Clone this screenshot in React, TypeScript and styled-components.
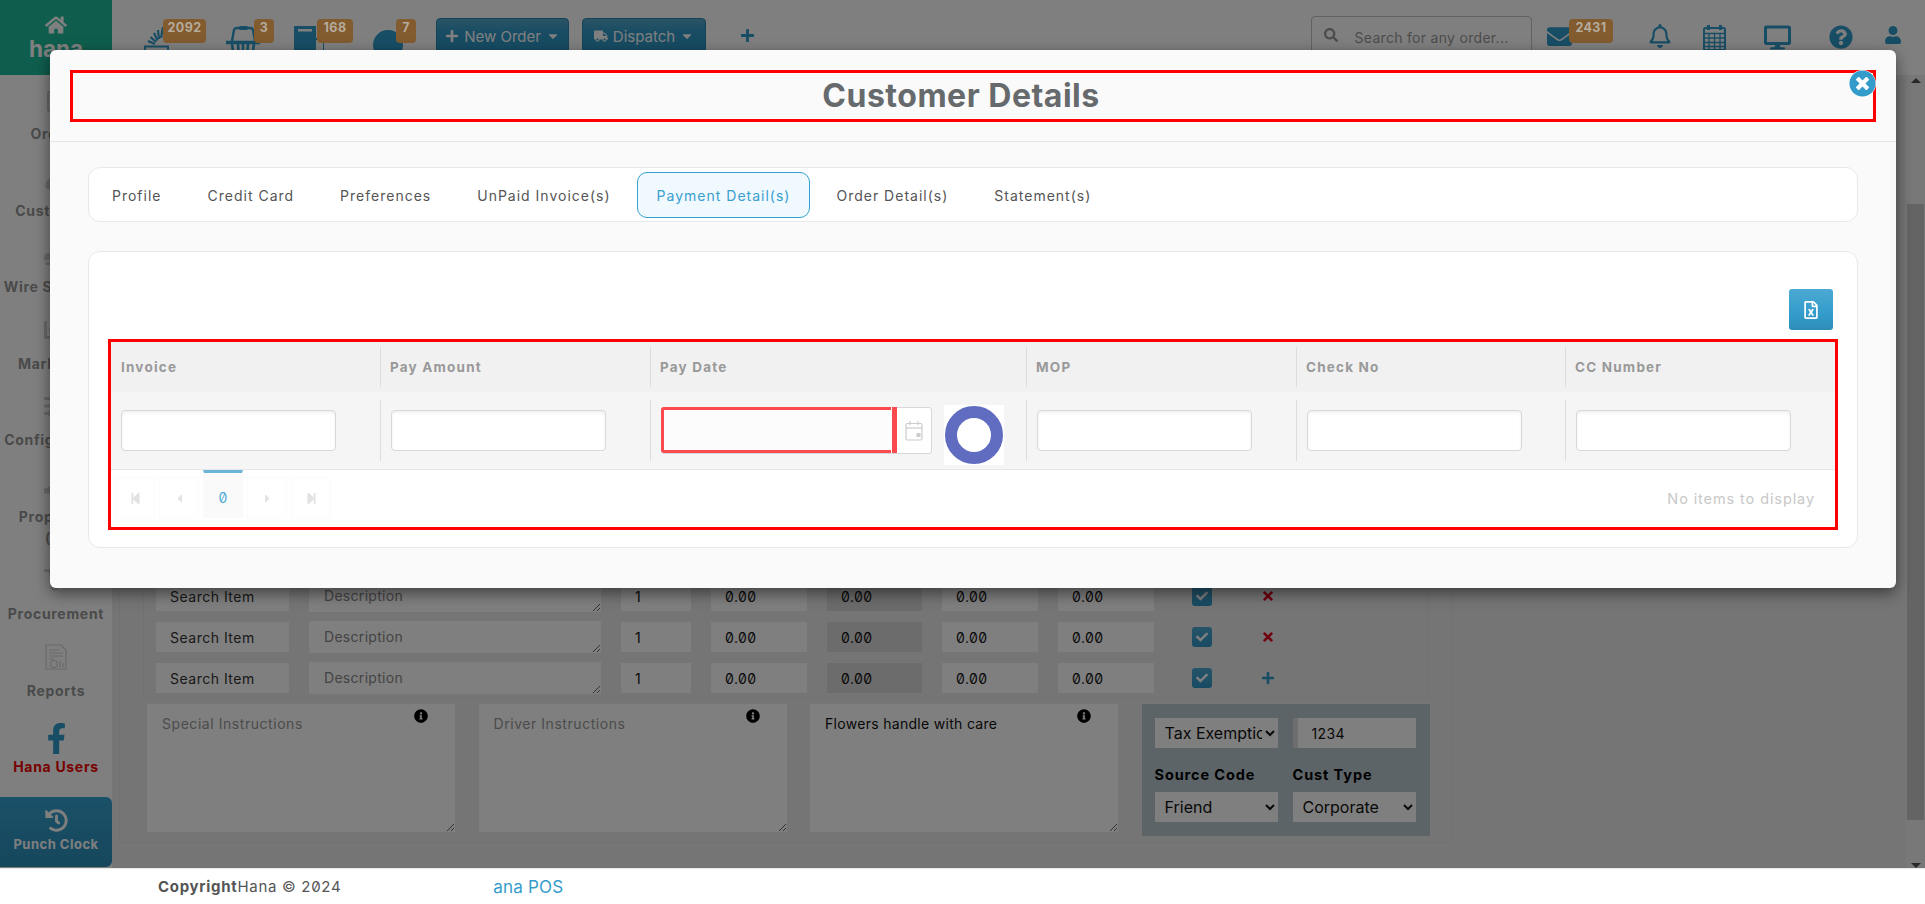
import React from "react";
import styled, { createGlobalStyle } from "styled-components";
import {
  FaHome, FaPlus, FaCaretDown, FaTruck, FaSearch, FaEnvelope, FaRegBell, FaDesktop,
  FaQuestionCircle, FaUser, FaTimesCircle, FaRegFileExcel, FaStepBackward, FaStepForward, FaCaretLeft,
  FaCaretRight, FaInfoCircle, FaCheck, FaTimes, FaRegClipboard, FaStamp, FaChartLine, FaSlidersH,
  FaHandHoldingUsd, FaDolly, FaFacebookF, FaHistory,
} from "react-icons/fa";

const GlobalStyle = createGlobalStyle`
  html, body { margin: 0; padding: 0; height: 100%; overflow: hidden; background: #fff; }
  body { font-family: Inter, "Liberation Sans", sans-serif; font-feature-settings: "zero" 1; }
  * { box-sizing: border-box; }
`;

const Page = styled.div`
  position: relative;
  width: 1925px;
  height: 904px;
  overflow: hidden;
`;
const Shell = styled.div`
  display: flex;
  height: 868px;
  background: #fff;
`;
const Sidebar = styled.aside`
  width: 112px;
  flex: none;
  display: flex;
  flex-direction: column;
  background: #fff;
`;
const Logo = styled.div`
  height: 75px;
  background: #1fbd9a;
  color: #fff;
  display: flex;
  flex-direction: column;
  align-items: center;
  padding-top: 14px;
  font-size: 22.5px;
  font-weight: 700;
  line-height: 28px;
  svg { font-size: 22px; margin-bottom: -1px; }
`;
const NavList = styled.nav`
  padding-top: 3px;
  display: flex;
  flex-direction: column;
`;
const NavItem = styled.div<{ $red?: boolean }>`
  padding: 9px 0 10.5px;
  display: flex;
  flex-direction: column;
  align-items: center;
  text-align: center;
  font-size: 14px;
  font-weight: 700;
  line-height: 21px;
  letter-spacing: 0.7px;
  white-space: nowrap;
  color: ${(p) => (p.$red ? "#f00000" : "#959595")};
`;
const NavIcon = styled.div<{ $blue?: boolean }>`
  height: 26px;
  margin-top: ${(p) => (p.$blue ? "5px" : "0")};
  margin-bottom: ${(p) => (p.$blue ? "5px" : "10px")};
  display: flex;
  align-items: center;
  justify-content: center;
  font-size: ${(p) => (p.$blue ? "31px" : "24px")};
  color: ${(p) => (p.$blue ? "#2f9ccb" : "#d2d2d2")};
`;
const PunchClock = styled.div`
  margin-top: auto;
  height: 70px;
  margin-bottom: 1px;
  border-radius: 0 6px 6px 0;
  background: linear-gradient(#36a3d2, #2b8db8);
  color: #fff;
  display: flex;
  flex-direction: column;
  align-items: center;
  font-size: 13px;
  font-weight: 700;
  letter-spacing: 0.5px;
  padding-top: 12px;
  svg { font-size: 23px; margin-bottom: 4px; }
`;
const Column = styled.div`
  flex: 1;
  min-width: 0;
  display: flex;
  flex-direction: column;
`;
const TopBar = styled.header`
  height: 75px;
  flex: none;
  display: flex;
  align-items: flex-start;
  padding-right: 23px;
  background: #fff;
  color: #2f9ccb;
`;
const StatIcon = styled.div<{ $w: number; $gap: number; $top: number }>`
  position: relative;
  width: ${(p) => p.$w}px;
  margin-left: ${(p) => p.$gap}px;
  margin-top: ${(p) => p.$top}px;
  flex: none;
  line-height: 0;
`;
const Badge = styled.span<{ $left: number; $w: number; $top: number }>`
  position: absolute;
  z-index: 5;
  top: ${(p) => p.$top}px;
  left: ${(p) => p.$left}px;
  width: ${(p) => p.$w}px;
  height: 24px;
  border-radius: 4px;
  background: #825b2f;
  color: #b6ab9c;
  font-size: 12.5px;
  font-weight: 700;
  line-height: 17px;
  text-align: center;
  letter-spacing: 0.4px;
  font-feature-settings: "zero" 0;
`;
const HeadButton = styled.button<{ $w: number; $gap: number }>`
  width: ${(p) => p.$w}px;
  height: 36px;
  margin: 18px 0 0 ${(p) => p.$gap}px;
  padding: 0;
  flex: none;
  display: flex;
  align-items: center;
  justify-content: center;
  gap: 5px;
  border: 1px solid #2a86ae;
  border-radius: 4px;
  background: linear-gradient(#56a8cc, #2f99c8 40%, #2f97c6);
  color: #fff;
  font: 400 15px Inter, sans-serif;
  font-feature-settings: "zero" 1;
  svg { font-size: 14px; }
`;
const SearchBox = styled.div`
  width: 221px;
  height: 42px;
  margin: 16px 0 0 auto;
  flex: none;
  display: flex;
  align-items: flex-start;
  gap: 16.5px;
  padding: 11px 0 0 12px;
  border: 1px solid #c4c4c4;
  border-radius: 4px;
  color: #999;
  font-size: 14px;
  line-height: 20px;
  letter-spacing: 0.3px;
  white-space: nowrap;
  svg { font-size: 14px; margin-top: 0; flex: none; }
`;
const HeadIcon = styled(StatIcon)`
  svg { display: block; width: 100%; height: auto; }
`;
const Body = styled.div`
  flex: 1;
  min-height: 0;
  display: flex;
`;
const Main = styled.main`
  flex: 1;
  min-width: 0;
  display: flex;
  flex-direction: column;
  justify-content: flex-end;
  padding: 0 0 25px 7px;
  background: #ebebeb;
`;
const FormPanel = styled.section`
  width: 1333px;
  padding: 0 22px 6px 23px;
  border: 1px solid #e2e2e2;
  border-top: 0;
`;
const ItemTable = styled.div`
  padding: 0 12px 5px;
  border: 1px solid #e2e2e2;
  border-top: 0;
  margin-bottom: 6px;
`;
const ItemRow = styled.div`
  display: grid;
  grid-template-columns: 133px 292px 70px 96px 95px 96px 96px 38px 72px;
  column-gap: 20px;
  height: 30px;
  margin-top: 11px;
  align-items: center;
`;
const Field = styled.input<{ $shade?: boolean }>`
  width: 100%;
  height: 30px;
  min-width: 0;
  border: 0;
  outline: 0;
  padding: 0 14px;
  background: ${(p) => (p.$shade ? "#d8d8d8" : "#fff")};
  color: #111;
  font: 400 14px Inter, sans-serif;
  font-feature-settings: "zero" 1;
  letter-spacing: 0.4px;
  &::placeholder { color: #333; opacity: 1; letter-spacing: 0.5px; }
`;
const DescField = styled.textarea`
  display: block;
  width: 100%;
  height: 32px;
  border: 0;
  outline: 0;
  padding: 7px 15px;
  background: #fff;
  font: 400 14px/18px Inter, sans-serif;
  letter-spacing: 0.3px;
  &::placeholder { color: #888; opacity: 1; }
`;
const CheckBox = styled.span`
  justify-self: end;
  width: 20px;
  height: 20px;
  border-radius: 3px;
  background: linear-gradient(#4ba8d2, #2f97c6);
  color: #fff;
  display: flex;
  align-items: center;
  justify-content: center;
  font-size: 12px;
`;
const RowAction = styled.span<{ $blue?: boolean }>`
  justify-self: center;
  display: flex;
  font-size: 14px;
  color: ${(p) => (p.$blue ? "#2f9ccb" : "#e0001b")};
`;
const NotesRow = styled.div`
  display: flex;
  align-items: flex-start;
  margin-left: 4px;
  gap: 23.5px;
`;
const NoteWrap = styled.div`
  position: relative;
  width: 308px;
  height: 128px;
  flex: none;
`;
const NoteArea = styled.textarea`
  display: block;
  width: 100%;
  height: 100%;
  border: 0;
  outline: 0;
  padding: 10px 15px;
  background: #fff;
  color: #111;
  font: 400 14px/20px Inter, sans-serif;
  letter-spacing: 0.3px;
  &::placeholder { color: #999; opacity: 1; letter-spacing: 0.55px; }
`;
const NoteInfo = styled.span`
  position: absolute;
  top: 5px;
  right: 27px;
  display: flex;
  font-size: 14px;
  color: #000;
`;
const TaxPanel = styled.div`
  width: 288px;
  height: 132px;
  flex: none;
  padding: 14px 13px 0;
  background: #bac8d0;
  display: grid;
  grid-template-columns: 123px 123px;
  grid-template-rows: 30px 44px 30px;
  column-gap: 15px;
  align-items: center;
`;
const TaxLabel = styled.label`
  font-size: 14.5px;
  font-weight: 700;
  letter-spacing: 0.9px;
  color: #000;
  padding-top: 8px;
  white-space: nowrap;
`;
const Picker = styled.select`
  width: 100%;
  height: 30px;
  border: 0;
  outline: 0;
  background: #fff;
  padding: 0 0 0 6px;
  color: #111;
  font: 400 16px Inter, sans-serif;
`;
const TaxInput = styled(Field)`
  border-left: 5px solid #dcdcdc;
`;
const ScrollTrack = styled.div`
  width: 19px;
  flex: none;
  display: flex;
  flex-direction: column;
  align-items: center;
  background: #f1f1f1;
  padding-top: 3px;
`;
const ScrollArrow = styled.span<{ $down?: boolean }>`
  width: 0;
  height: 0;
  border-left: 5px solid transparent;
  border-right: 5px solid transparent;
  border-${(p) => (p.$down ? "top" : "bottom")}: 5px solid #505050;
`;
const ScrollThumb = styled.div`
  width: 17px;
  height: 616px;
  margin: 121px 0 auto;
  background: #c8c8c8;
`;
const Footer = styled.footer`
  height: 36px;
  display: flex;
  align-items: center;
  padding-left: 158px;
  background: #fff;
  border-top: 1px solid #e8e8e8;
  color: #555;
  font-size: 15px;
  letter-spacing: 0.7px;
`;
const FooterLink = styled.a`
  margin-left: 152px;
  color: #339ccb;
  font-size: 17px;
  letter-spacing: 0.2px;
`;
const Overlay = styled.div`
  position: absolute;
  z-index: 4;
  left: 0;
  top: 0;
  width: 100%;
  height: 868px;
  background: rgba(0, 0, 0, 0.5);
`;
const Modal = styled.div`
  position: absolute;
  z-index: 6;
  left: 50px;
  top: 50px;
  width: 1846px;
  height: 538px;
  background: #fafafa;
  border-radius: 6px;
  box-shadow: 0 5px 15px rgba(0, 0, 0, 0.5);
`;
const ModalHeader = styled.div`
  height: 92px;
  padding: 20px 20px 0;
  border-bottom: 1px solid #e5e5e5;
`;
const ModalTitle = styled.h2`
  margin: 0;
  height: 52px;
  padding-right: 24px;
  border: 3px solid #f00;
  text-align: center;
  color: #666a6d;
  font-size: 32px;
  font-weight: 700;
  line-height: 46px;
  letter-spacing: 0.5px;
`;
const CloseButton = styled.span`
  position: absolute;
  top: 20px;
  right: 20px;
  width: 27px;
  height: 27px;
  border-radius: 50%;
  background: #fff;
  display: flex;
  color: #339ccb;
  font-size: 27px;
`;
const TabBar = styled.div`
  margin: 25px 38px 0;
  height: 55px;
  padding: 4px 3px;
  display: flex;
  gap: 6px;
  background: #fff;
  border: 1px solid #e8e8e8;
  border-radius: 12px;
`;
const Tab = styled.div<{ $active?: boolean }>`
  height: 46px;
  padding: 0 19px;
  display: flex;
  align-items: center;
  border: 1px solid ${(p) => (p.$active ? "#33a0d0" : "transparent")};
  border-radius: 10px;
  background: ${(p) => (p.$active ? "#eff9fe" : "transparent")};
  color: ${(p) => (p.$active ? "#3a9fce" : "#555")};
  font-size: 14px;
  letter-spacing: 1px;
  white-space: nowrap;
`;
const ContentPanel = styled.div`
  margin: 29px 38px 0;
  height: 297px;
  padding: 37px 19px 0 19px;
  background: #fff;
  border: 1px solid #e8e8e8;
  border-radius: 12px;
`;
const ExportRow = styled.div`
  display: flex;
  justify-content: flex-end;
  padding-right: 5px;
  margin-bottom: 9px;
`;
const ExportButton = styled.span`
  width: 44px;
  height: 41px;
  border-radius: 3px;
  background: linear-gradient(#4ba9d3, #339ccb 60%, #2d8db8);
  color: #fff;
  display: flex;
  align-items: center;
  justify-content: center;
  font-size: 18px;
`;
const GridBox = styled.div`
  height: 191px;
  border: 3px solid #f00;
  background: #fff;
`;
const GRID_COLUMNS = "269px 270px 376px 270px 269px 1fr";
const GridHead = styled.div`
  height: 50px;
  display: grid;
  grid-template-columns: ${GRID_COLUMNS};
  align-items: center;
  background: #f1f1f1;
`;
const HeadCell = styled.div<{ $first?: boolean }>`
  height: 40px;
  padding-left: ${(p) => (p.$first ? 10 : 9)}px;
  border-left: ${(p) => (p.$first ? "0" : "1px solid #ddd")};
  display: flex;
  align-items: center;
  color: #999;
  font-size: 13.5px;
  font-weight: 700;
  letter-spacing: 1.2px;
`;
const FilterRow = styled.div`
  height: 78px;
  display: grid;
  grid-template-columns: ${GRID_COLUMNS};
  align-items: center;
  background: #f5f5f5;
  border-bottom: 1px solid #e6e6e6;
`;
const FilterCell = styled.div<{ $first?: boolean }>`
  position: relative;
  height: 61px;
  padding-left: 10px;
  border-left: ${(p) => (p.$first ? "0" : "1px solid #ddd")};
  display: flex;
  align-items: center;
`;
const FilterInput = styled.input`
  width: 215px;
  height: 41px;
  border: 1px solid #d8d8d8;
  border-radius: 4px;
  outline: 0;
  background: #fff;
  box-shadow: inset 0 2px 3px rgba(0, 0, 0, 0.06);
`;
const DateBox = styled.div`
  position: relative;
  width: 271px;
  height: 47px;
  display: flex;
  border: 1px solid #d8d8d8;
  border-radius: 3px;
  background: #fff;
  &::before, &::after {
    content: "";
    position: absolute;
    z-index: 1;
    left: 229px;
    width: 1px;
    height: 3px;
    background: #fff;
  }
  &::before { top: -1px; }
  &::after { bottom: 0; }
`;
const DateInput = styled.input`
  width: 236px;
  height: 46px;
  margin: -1px 0 0 -1px;
  flex: none;
  border: solid #fb4a4e;
  border-width: 3px 5px 3px 3px;
  outline: 0;
  border-radius: 3px 0 0 3px;
  background: #fcfcfc;
`;
const CalendarButton = styled.span`
  flex: 1;
  display: flex;
  align-items: center;
  justify-content: center;
  color: #ccc;
`;
const SpinnerBox = styled.div`
  position: absolute;
  left: 293px;
  top: 5px;
  width: 60px;
  height: 60px;
  background: #fff;
  display: flex;
  align-items: center;
  justify-content: center;
`;
const SpinnerRing = styled.div`
  width: 58px;
  height: 58px;
  border-radius: 50%;
  border: 12.5px solid #5f6cc0;
`;
const Pager = styled.div`
  height: 57px;
  display: flex;
  align-items: flex-start;
  gap: 4px;
  padding-left: 4px;
`;
const PageButton = styled.span<{ $active?: boolean }>`
  width: 40px;
  height: ${(p) => (p.$active ? "48px" : "42px")};
  margin-top: ${(p) => (p.$active ? "0" : "7px")};
  padding-top: ${(p) => (p.$active ? "5px" : "0")};
  display: flex;
  align-items: center;
  justify-content: center;
  border: 1px solid ${(p) => (p.$active ? "transparent" : "#fbfbfb")};
  border-top: ${(p) => (p.$active ? "3px solid #6bb5d9" : "1px solid #fbfbfb")};
  background: ${(p) => (p.$active ? "#fafafa" : "#fff")};
  color: ${(p) => (p.$active ? "#55acd6" : "#e2e2e2")};
  font-size: ${(p) => (p.$active ? "14px" : "13px")};
`;
const PagerInfo = styled.span`
  margin: 20px 20px 0 auto;
  color: #c8c8c8;
  font-size: 14.5px;
  line-height: 18px;
  letter-spacing: 0.9px;
`;

const ReportIcon = () => (
  <svg width="22" height="26" viewBox="0 0 22 26" fill="none" stroke="currentColor" strokeWidth="1.2">
    <path d="M1 1h15l5 5v19H1z" />
    <path d="M4 6h10M4 9h14M4 12h14M4 15h5" />
    <circle cx="9" cy="20" r="3.5" />
    <path d="M15 17v6M18 19v4" />
  </svg>
);
const FanIcon = () => (
  <svg width="26" height="24" viewBox="0 0 26 24" stroke="currentColor" strokeWidth="2.2" fill="none">
    <path d="M19 0 L17 11M14 3 L15 12M10 6 L13.500 13.500M6.500 10 L12 15M4 14 L11 17" />
    <path d="M0 19.500 H25M1 19v5M24 19v5" strokeWidth="1.800" />
  </svg>
);
const BasketIcon = () => (
  <svg width="34" height="34" viewBox="0 0 34 34" fill="none" stroke="currentColor">
    <path d="M6 15 L8 4 Q8.5 2 11 2 H24 Q26.500 2 27 4 L29 15" strokeWidth="2.4" />
    <rect x="13" y="0" width="9" height="4" rx="1.500" fill="currentColor" stroke="none" />
    <path d="M0 16.500 H34" strokeWidth="3.500" />
    <path d="M6 18 L8 32 M12 18 L13 32 M17 18 V32 M22 18 L21 32 M28 18 L26 32" strokeWidth="2.600" />
  </svg>
);
const TerminalIcon = () => (
  <svg width="30" height="34" viewBox="0 0 30 34">
    <path d="M0 0 H22 V12 H30 V34 H0 Z" fill="currentColor" />
    <rect x="4" y="3" width="14" height="2.500" fill="#fff" />
    <rect x="22" y="14" width="7" height="19" fill="#fff" />
  </svg>
);
const BlobIcon = () => (
  <svg width="30" height="34" viewBox="0 0 30 34">
    <ellipse cx="15" cy="15" rx="15" ry="15" fill="currentColor" />
  </svg>
);
const GridCalendarIcon = () => (
  <svg width="23" height="26" viewBox="0 0 23 26" fill="none" stroke="currentColor" strokeWidth="1.3">
    <path d="M5.500 0v5M17.500 0v5" strokeWidth="3" />
    <rect x="1" y="3" width="21" height="22" rx="1.500" strokeWidth="2" />
    <path d="M1 8.500h21M1 13h21M1 17.500h21M1 21.500h21M6 8v17M11.500 8v17M17 8v17" />
  </svg>
);
const DateIcon = () => (
  <svg width="18" height="20" viewBox="0 0 18 20" fill="none" stroke="currentColor" strokeWidth="1.2">
    <path d="M5 0v4M13 0v4" />
    <rect x="1" y="2.500" width="16" height="16.500" rx="1.500" />
    <path d="M1 7h16" />
    <rect x="11.500" y="12" width="4" height="4" fill="currentColor" stroke="none" />
  </svg>
);

const COLS = ["Invoice", "Pay Amount", "Pay Date", "MOP", "Check No", "CC Number"];
const TABS = ["Profile", "Credit Card", "Preferences", "UnPaid Invoice(s)", "Payment Detail(s)", "Order Detail(s)", "Statement(s)"];
const NAV: { label: React.ReactNode; icon: React.ReactNode; red?: boolean; blue?: boolean }[] = [
  { label: "Orders", icon: <FaRegClipboard /> },
  { label: "Customers", icon: <FaUser /> },
  { label: "Wire Services", icon: <FaStamp /> },
  { label: "Marketing", icon: <FaChartLine /> },
  { label: "Configuration", icon: <FaSlidersH /> },
  { label: <>Proposals<br />(0)</>, icon: <FaHandHoldingUsd /> },
  { label: "Procurement", icon: <FaDolly /> },
  { label: "Reports", icon: <ReportIcon /> },
  { label: "Hana Users", icon: <FaFacebookF />, red: true, blue: true },
];

const Row = ({ plus }: { plus?: boolean }) => (
  <ItemRow>
    <Field placeholder="Search Item" readOnly />
    <DescField placeholder="Description" readOnly />
    <Field defaultValue="1" readOnly />
    <Field defaultValue="0.00" readOnly />
    <Field $shade defaultValue="0.00" readOnly />
    <Field defaultValue="0.00" readOnly />
    <Field defaultValue="0.00" readOnly />
    <CheckBox><FaCheck /></CheckBox>
    <RowAction $blue={plus}>{plus ? <FaPlus /> : <FaTimes />}</RowAction>
  </ItemRow>
);

const Note = ({ placeholder, value }: { placeholder?: string; value?: string }) => (
  <NoteWrap>
    <NoteArea placeholder={placeholder} defaultValue={value} readOnly />
    <NoteInfo><FaInfoCircle /></NoteInfo>
  </NoteWrap>
);

export default function App() {
  return (
    <Page>
      <GlobalStyle />
      <Shell>
        <Sidebar>
          <Logo><FaHome />hana</Logo>
          <NavList>
            {NAV.map((n, i) => (
              <NavItem key={i} $red={n.red}>
                <NavIcon $blue={n.blue}>{n.icon}</NavIcon>
                {n.label}
              </NavItem>
            ))}
          </NavList>
          <PunchClock><FaHistory />Punch Clock</PunchClock>
        </Sidebar>
        <Column>
          <TopBar>
            <StatIcon $w={26} $gap={32} $top={27}><FanIcon /><Badge $left={19} $w={43} $top={-8}>2092</Badge></StatIcon>
            <StatIcon $w={34} $gap={56} $top={26}><BasketIcon /><Badge $left={28} $w={20} $top={-7}>3</Badge></StatIcon>
            <StatIcon $w={30} $gap={34} $top={26}><TerminalIcon /><Badge $left={23} $w={36} $top={-7}>168</Badge></StatIcon>
            <StatIcon $w={30} $gap={49} $top={30}><BlobIcon /><Badge $left={23} $w={20} $top={-11}>7</Badge></StatIcon>
            <HeadButton $w={133} $gap={33}><FaPlus />New Order<FaCaretDown /></HeadButton>
            <HeadButton $w={124} $gap={13}><FaTruck />Dispatch<FaCaretDown /></HeadButton>
            <HeadIcon $w={15} $gap={34} $top={28}><FaPlus /></HeadIcon>
            <SearchBox><FaSearch />Search for any order...</SearchBox>
            <HeadIcon $w={25} $gap={15} $top={24}><FaEnvelope /><Badge $left={22} $w={44} $top={-5}>2431</Badge></HeadIcon>
            <HeadIcon $w={24} $gap={76} $top={24}><FaRegBell /></HeadIcon>
            <HeadIcon $w={23} $gap={31} $top={25}><GridCalendarIcon /></HeadIcon>
            <HeadIcon $w={27} $gap={38} $top={24}><FaDesktop /></HeadIcon>
            <HeadIcon $w={24} $gap={38} $top={25}><FaQuestionCircle /></HeadIcon>
            <HeadIcon $w={18} $gap={31} $top={26}><FaUser /></HeadIcon>
          </TopBar>
          <Body>
            <Main>
              <FormPanel>
                <ItemTable>
                  <Row />
                  <Row />
                  <Row plus />
                </ItemTable>
                <NotesRow>
                  <Note placeholder="Special Instructions" />
                  <Note placeholder="Driver Instructions" />
                  <Note value="Flowers handle with care" />
                  <TaxPanel>
                    <Picker defaultValue="Tax Exemption"><option>Tax Exemption</option></Picker>
                    <TaxInput defaultValue="1234" readOnly />
                    <TaxLabel>Source Code</TaxLabel>
                    <TaxLabel>Cust Type</TaxLabel>
                    <Picker defaultValue="Friend"><option>Friend</option></Picker>
                    <Picker defaultValue="Corporate"><option>Corporate</option></Picker>
                  </TaxPanel>
                </NotesRow>
              </FormPanel>
            </Main>
            <ScrollTrack>
              <ScrollArrow />
              <ScrollThumb />
              <ScrollArrow $down />
            </ScrollTrack>
          </Body>
        </Column>
      </Shell>
      <Footer>
        <b>Copyright</b>Hana © 2024
        <FooterLink>ana POS</FooterLink>
      </Footer>
      <Overlay />
      <Modal>
        <ModalHeader>
          <ModalTitle>Customer Details</ModalTitle>
          <CloseButton><FaTimesCircle /></CloseButton>
        </ModalHeader>
        <TabBar>
          {TABS.map((t, i) => (
            <Tab key={t} $active={i === 4}>{t}</Tab>
          ))}
        </TabBar>
        <ContentPanel>
          <ExportRow><ExportButton><FaRegFileExcel /></ExportButton></ExportRow>
          <GridBox>
            <GridHead>
              {COLS.map((c, i) => (
                <HeadCell key={c} $first={i === 0}>{c}</HeadCell>
              ))}
            </GridHead>
            <FilterRow>
              {COLS.map((c, i) => (
                <FilterCell key={c} $first={i === 0}>
                  {i === 2 ? (
                    <>
                      <DateBox>
                        <DateInput readOnly />
                        <CalendarButton><DateIcon /></CalendarButton>
                      </DateBox>
                      <SpinnerBox><SpinnerRing /></SpinnerBox>
                    </>
                  ) : (
                    <FilterInput readOnly />
                  )}
                </FilterCell>
              ))}
            </FilterRow>
            <Pager>
              <PageButton><FaStepBackward /></PageButton>
              <PageButton><FaCaretLeft /></PageButton>
              <PageButton $active>0</PageButton>
              <PageButton><FaCaretRight /></PageButton>
              <PageButton><FaStepForward /></PageButton>
              <PagerInfo>No items to display</PagerInfo>
            </Pager>
          </GridBox>
        </ContentPanel>
      </Modal>
    </Page>
  );
}
